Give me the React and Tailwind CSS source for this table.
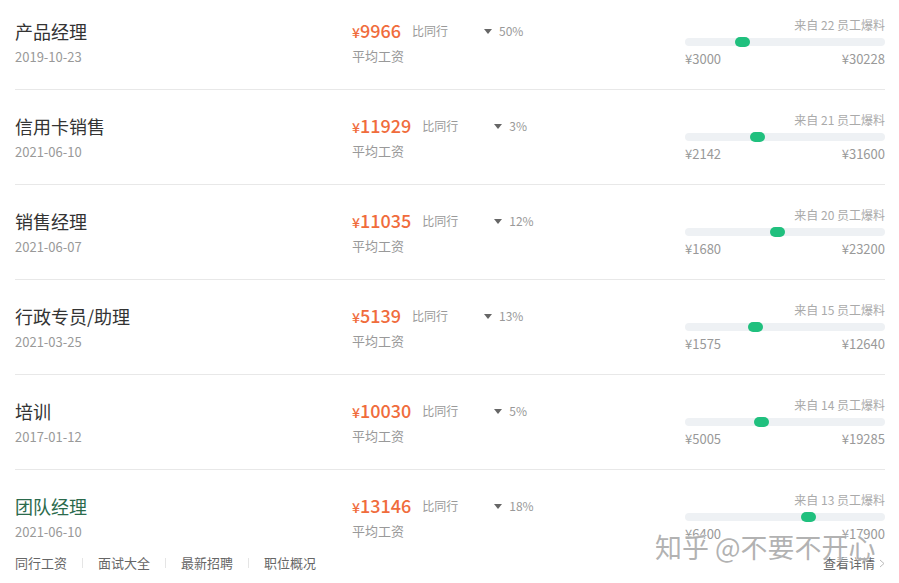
import React from 'react';

const jobs = [
    { name: '产品经理', date: '2019-10-23', salary: 9966, pct: '50%', count: 22, min: 3000, max: 30228, dot: 28.5 },
    { name: '信用卡销售', date: '2021-06-10', salary: 11929, pct: '3%', count: 21, min: 2142, max: 31600, dot: 36 },
    { name: '销售经理', date: '2021-06-07', salary: 11035, pct: '12%', count: 20, min: 1680, max: 23200, dot: 46 },
    { name: '行政专员/助理', date: '2021-03-25', salary: 5139, pct: '13%', count: 15, min: 1575, max: 12640, dot: 35 },
    { name: '培训', date: '2017-01-12', salary: 10030, pct: '5%', count: 14, min: 5005, max: 19285, dot: 38 },
    { name: '团队经理', date: '2021-06-10', salary: 13146, pct: '18%', count: 13, min: 6400, max: 17900, dot: 61.5, last: true },
];

const Caret = () => (
    <svg width="8" height="5" viewBox="0 0 8 5" className="mr-[7px]">
        <path d="M0 0 H8 L4 5 Z" fill="#666" />
    </svg>
);

const App = () => {
    return (
        <div className="relative w-[899px] h-[583px] overflow-hidden bg-white" style={{ fontFamily: '"Noto Sans CJK SC", "Noto Sans", sans-serif' }}>
            <div className="ml-[15px] mr-[14px]">
                {jobs.map((job, i) => (
                    <div
                        key={job.name}
                        className={`flex ${i === 0 ? 'h-[90px] pt-[19px]' : 'pt-[24px]'} ${job.last ? 'h-[120px]' : i === 0 ? 'border-b border-[#e8e8e8]' : 'h-[95px] border-b border-[#e8e8e8]'}`}
                    >
                        {/* name + date */}
                        <div className="w-[337px] shrink-0">
                            <div className={`text-[18px] leading-[24px] ${job.last ? 'text-[#2b6a4c]' : 'text-[#333]'}`}>{job.name}</div>
                            <div className="mt-[5px] text-[13px] leading-[18px] text-[#999]">{job.date}</div>
                            {job.last && (
                                <div className="mt-[13px] flex items-center text-[13px] leading-[18px] text-[#666]">
                                    <span>同行工资</span>
                                    <span className="mx-[15px] h-[10px] w-px bg-[#e5e5e5]" />
                                    <span>面试大全</span>
                                    <span className="mx-[15px] h-[10px] w-px bg-[#e5e5e5]" />
                                    <span>最新招聘</span>
                                    <span className="mx-[15px] h-[10px] w-px bg-[#e5e5e5]" />
                                    <span>职位概况</span>
                                </div>
                            )}
                        </div>

                        {/* salary */}
                        <div className="w-[200px] shrink-0">
                            <div className="flex items-center h-[24px]">
                                <span className="text-[#f06c3c] font-medium text-[18px] leading-[24px]">
                                    <span className="text-[14px]">¥</span>{job.salary}
                                </span>
                                <span className="ml-[11px] w-[72px] text-[12px] text-[#999]">比同行</span>
                                <Caret />
                                <span className="text-[12px] text-[#999]">{job.pct}</span>
                            </div>
                            <div className="mt-[4px] text-[13px] leading-[18px] text-[#999]">平均工资</div>
                        </div>

                        {/* range */}
                        <div className="ml-auto w-[200px] shrink-0 -mt-[2px]">
                            <div className="text-right text-[12px] leading-[16px] text-[#aaa]">来自 {job.count} 员工爆料</div>
                            <div className="relative mt-[5px] h-[8px] rounded-full bg-[#eef1f4]">
                                <div
                                    className="absolute top-[-1px] h-[10px] w-[15px] rounded-full bg-[#20c07e]"
                                    style={{ left: `calc(${job.dot}% - 7px)` }}
                                />
                            </div>
                            <div className="mt-[4px] flex justify-between text-[13px] leading-[18px] text-[#999]">
                                <span>¥{job.min}</span>
                                <span>¥{job.max}</span>
                            </div>
                            {job.last && (
                                <div className="mt-[11px] flex items-center justify-end text-[13px] leading-[18px] text-[#666]">
                                    查看详情
                                    <svg width="6" height="9" viewBox="0 0 6 9" className="ml-[4px]">
                                        <path d="M1 1 L5 4.5 L1 8" fill="none" stroke="#bbb" strokeWidth="1" />
                                    </svg>
                                </div>
                            )}
                        </div>
                    </div>
                ))}
            </div>

            {/* watermark */}
            <div
                className="absolute left-[655px] top-[530px] text-[27px] leading-[34px] text-[#999]/75 pointer-events-none"
                style={{ textShadow: '0 0 2px #fff, 0 0 2px #fff' }}
            >
                知乎 @不要不开心
            </div>
        </div>
    );
};

export default App;
